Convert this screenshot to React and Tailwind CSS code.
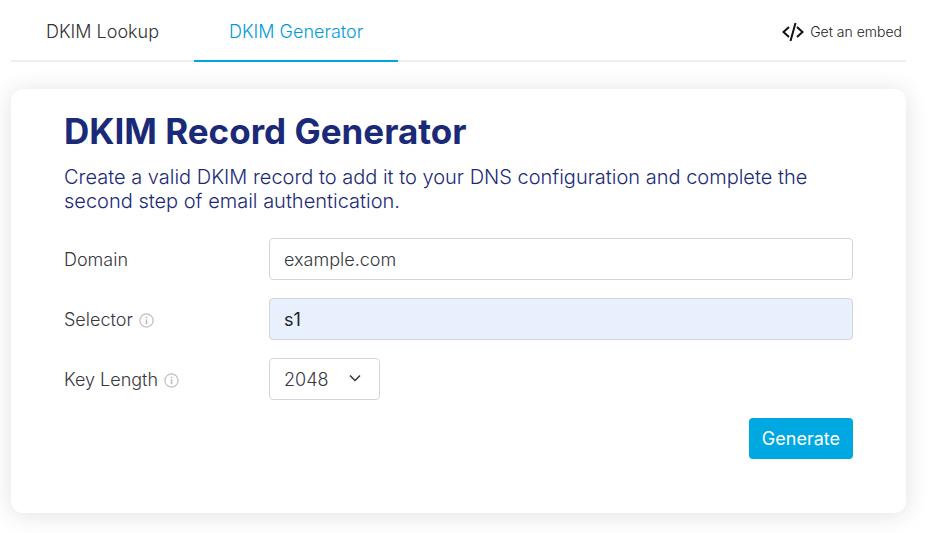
function InfoIcon() {
  return (
    <svg className="h-[15px] w-[15px]" viewBox="0 0 15 15" fill="none" stroke="#bdbdbd">
      <circle cx="7.5" cy="7.5" r="6.6" strokeWidth="1.2" />
      <path d="M7.5 6.3V11.2" strokeWidth="1.6" />
      <path d="M7.5 3.6V5.2" strokeWidth="1.6" />
    </svg>
  );
}

function Field({ id, label, hint, children }) {
  return (
    <div className="flex items-center">
      <div className="flex w-[205px] shrink-0 items-center gap-[6px] pt-[2px] font-light">
        <label htmlFor={id}>{label}</label>
        {hint && <InfoIcon />}
      </div>
      {children}
    </div>
  );
}

export default function App() {
  return (
    <main className="min-h-screen bg-white pr-[34px] pb-5 pl-[11px] font-['Inter',sans-serif] text-lg text-[#38383f]">
      <nav className="flex h-[62px] items-stretch justify-between border-b-2 border-[#eeeef0]">
        <div className="-mb-[2px] flex font-light">
          <a href="#lookup" className="flex items-center border-b-2 border-transparent px-[35px] pt-1 text-[#333333]">DKIM Lookup</a>
          <a href="#generator" className="flex items-center border-b-2 border-[#00a8e1] px-[35px] pt-1 text-[#009bdc]">DKIM Generator</a>
        </div>
        <a href="#embed" className="flex items-center gap-[6px] pt-1 pr-1 text-sm font-light text-[#222222]">
          <svg className="h-5 w-[22px]" viewBox="0 0 22 20" fill="none" stroke="#111" strokeWidth="2">
            <path d="M7 5L1.5 10L7 15M15 5L20.5 10L15 15M13.5 1L8.5 19" />
          </svg>
          Get an embed
        </a>
      </nav>

      <section className="mt-[27px] rounded-xl bg-white px-[53px] pt-[19px] pb-[54px] shadow-[0_2px_24px_rgba(0,0,0,0.12)]">
        <h1 className="text-[35px] leading-[46px] font-bold text-[#1b2a78]">DKIM Record Generator</h1>
        <p className="mt-[11px] text-xl leading-6 font-light text-[#1b2a78]">
          Create a valid DKIM record to add it to your DNS configuration and complete the second step of email authentication.
        </p>

        <form className="mt-[25px] flex flex-col gap-[18px]">
          <Field id="domain" label="Domain">
            <input id="domain" defaultValue="example.com" className="h-[42px] min-w-0 flex-1 rounded-sm border border-[#d2d6dc] px-[14px] font-light" />
          </Field>
          <Field id="selector" label="Selector" hint>
            <input id="selector" defaultValue="s1" className="h-[42px] min-w-0 flex-1 rounded-sm border border-[#d2d6dc] bg-[#e8f0fe] px-[14px] text-[#222222]" />
          </Field>
          <Field id="length" label="Key Length" hint>
            <div className="relative">
              <select id="length" className="h-[42px] w-[111px] appearance-none rounded-sm border border-[#d2d6dc] bg-white px-[14px] pt-px font-light">
                <option>2048</option>
              </select>
              <svg className="pointer-events-none absolute top-4 right-[19px] h-2 w-3" viewBox="0 0 12 8" fill="none" stroke="#333" strokeWidth="1.5">
                <path d="M1 1.5L6 6.5L11 1.5" />
              </svg>
            </div>
          </Field>
          <button type="button" className="h-[41px] self-end rounded-sm bg-[#00a8e1] px-[13px] text-white">Generate</button>
        </form>
      </section>
    </main>
  );
}
